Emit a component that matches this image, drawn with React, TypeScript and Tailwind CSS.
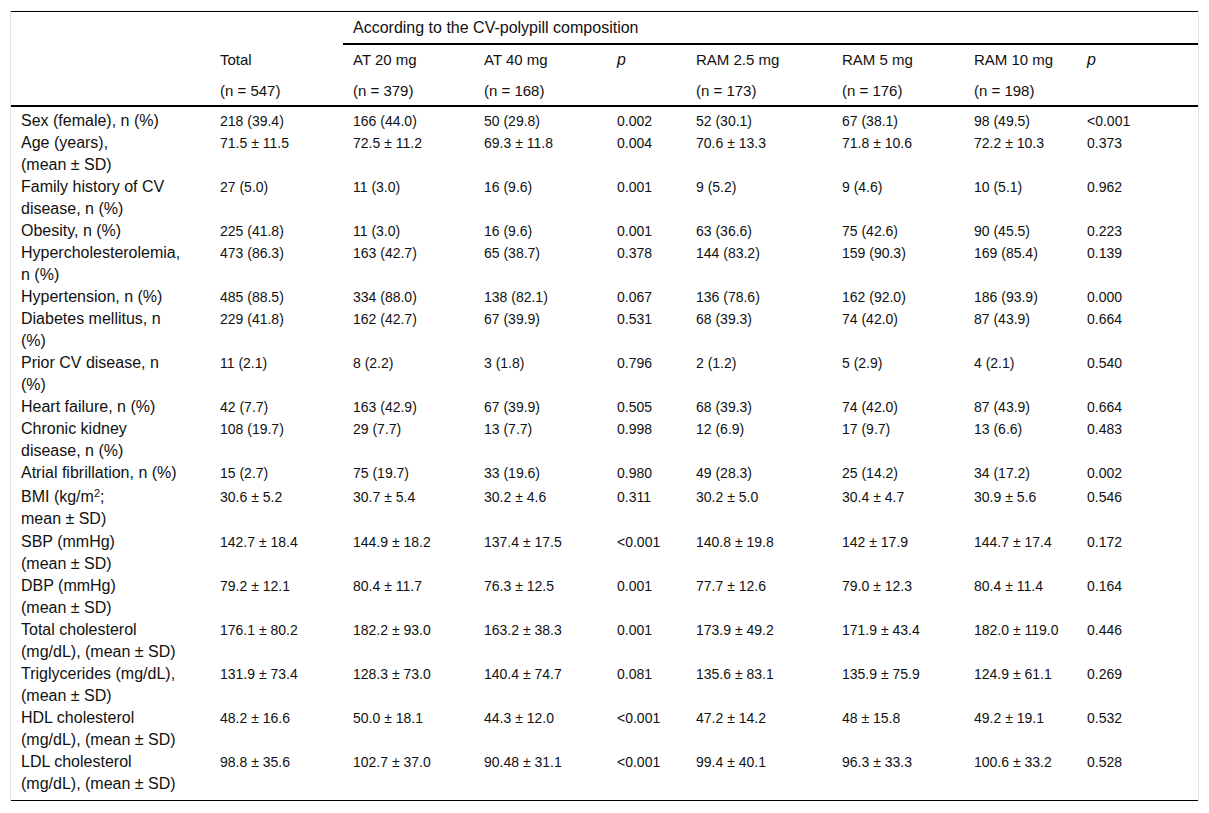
import React from "react";

type Row = { label: React.ReactNode[]; cells: string[]; extra?: boolean };

const rows: Row[] = [
  { label: ["Sex (female), n (%)"], cells: ["218 (39.4)", "166 (44.0)", "50 (29.8)", "0.002", "52 (30.1)", "67 (38.1)", "98 (49.5)", "<0.001"] },
  { label: ["Age (years),", "(mean ± SD)"], cells: ["71.5 ± 11.5", "72.5 ± 11.2", "69.3 ± 11.8", "0.004", "70.6 ± 13.3", "71.8 ± 10.6", "72.2 ± 10.3", "0.373"] },
  { label: ["Family history of CV", "disease, n (%)"], cells: ["27 (5.0)", "11 (3.0)", "16 (9.6)", "0.001", "9 (5.2)", "9 (4.6)", "10 (5.1)", "0.962"] },
  { label: ["Obesity, n (%)"], cells: ["225 (41.8)", "11 (3.0)", "16 (9.6)", "0.001", "63 (36.6)", "75 (42.6)", "90 (45.5)", "0.223"] },
  { label: ["Hypercholesterolemia,", "n (%)"], cells: ["473 (86.3)", "163 (42.7)", "65 (38.7)", "0.378", "144 (83.2)", "159 (90.3)", "169 (85.4)", "0.139"] },
  { label: ["Hypertension, n (%)"], cells: ["485 (88.5)", "334 (88.0)", "138 (82.1)", "0.067", "136 (78.6)", "162 (92.0)", "186 (93.9)", "0.000"] },
  { label: ["Diabetes mellitus, n", "(%)"], cells: ["229 (41.8)", "162 (42.7)", "67 (39.9)", "0.531", "68 (39.3)", "74 (42.0)", "87 (43.9)", "0.664"] },
  { label: ["Prior CV disease, n", "(%)"], cells: ["11 (2.1)", "8 (2.2)", "3 (1.8)", "0.796", "2 (1.2)", "5 (2.9)", "4 (2.1)", "0.540"] },
  { label: ["Heart failure, n (%)"], cells: ["42 (7.7)", "163 (42.9)", "67 (39.9)", "0.505", "68 (39.3)", "74 (42.0)", "87 (43.9)", "0.664"] },
  { label: ["Chronic kidney", "disease, n (%)"], cells: ["108 (19.7)", "29 (7.7)", "13 (7.7)", "0.998", "12 (6.9)", "17 (9.7)", "13 (6.6)", "0.483"] },
  { label: ["Atrial fibrillation, n (%)"], cells: ["15 (2.7)", "75 (19.7)", "33 (19.6)", "0.980", "49 (28.3)", "25 (14.2)", "34 (17.2)", "0.002"] },
  {
    label: [
      <>
        BMI (kg/m<sup className="text-[11px]">2</sup>;
      </>,
      "mean ± SD)",
    ],
    cells: ["30.6 ± 5.2", "30.7 ± 5.4", "30.2 ± 4.6", "0.311", "30.2 ± 5.0", "30.4 ± 4.7", "30.9 ± 5.6", "0.546"],
    extra: true,
  },
  { label: ["SBP (mmHg)", "(mean ± SD)"], cells: ["142.7 ± 18.4", "144.9 ± 18.2", "137.4 ± 17.5", "<0.001", "140.8 ± 19.8", "142 ± 17.9", "144.7 ± 17.4", "0.172"] },
  { label: ["DBP (mmHg)", "(mean ± SD)"], cells: ["79.2 ± 12.1", "80.4 ± 11.7", "76.3 ± 12.5", "0.001", "77.7 ± 12.6", "79.0 ± 12.3", "80.4 ± 11.4", "0.164"] },
  { label: ["Total cholesterol", "(mg/dL), (mean ± SD)"], cells: ["176.1 ± 80.2", "182.2 ± 93.0", "163.2 ± 38.3", "0.001", "173.9 ± 49.2", "171.9 ± 43.4", "182.0 ± 119.0", "0.446"] },
  { label: ["Triglycerides (mg/dL),", "(mean ± SD)"], cells: ["131.9 ± 73.4", "128.3 ± 73.0", "140.4 ± 74.7", "0.081", "135.6 ± 83.1", "135.9 ± 75.9", "124.9 ± 61.1", "0.269"] },
  { label: ["HDL cholesterol", "(mg/dL), (mean ± SD)"], cells: ["48.2 ± 16.6", "50.0 ± 18.1", "44.3 ± 12.0", "<0.001", "47.2 ± 14.2", "48 ± 15.8", "49.2 ± 19.1", "0.532"] },
  { label: ["LDL cholesterol", "(mg/dL), (mean ± SD)"], cells: ["98.8 ± 35.6", "102.7 ± 37.0", "90.48 ± 31.1", "<0.001", "99.4 ± 40.1", "96.3 ± 33.3", "100.6 ± 33.2", "0.528"] },
];

const groups = [
  { name: "Total", n: "(n = 547)" },
  { name: "AT 20 mg", n: "(n = 379)" },
  { name: "AT 40 mg", n: "(n = 168)" },
  { name: "p", n: "" },
  { name: "RAM 2.5 mg", n: "(n = 173)" },
  { name: "RAM 5 mg", n: "(n = 176)" },
  { name: "RAM 10 mg", n: "(n = 198)" },
  { name: "p", n: "" },
];

export default function App() {
  return (
    <div className="min-h-screen bg-white pt-[10px] text-[16px] leading-[22px] text-[#111] font-['Liberation_Sans',Arial,sans-serif]">
      <div className="ml-[10px] w-[1189px] border-x border-[#e6e6e6] pt-[1px]">
        <table className="w-full table-fixed border-separate border-spacing-0 border-t border-black text-left">
          <colgroup>
            <col className="w-[199px]" />
            <col className="w-[133px]" />
            <col className="w-[131px]" />
            <col className="w-[133px]" />
            <col className="w-[79px]" />
            <col className="w-[146px]" />
            <col className="w-[132px]" />
            <col className="w-[113px]" />
            <col className="w-[121px]" />
          </colgroup>
          <thead>
            <tr>
              <th className="font-normal" />
              <th className="font-normal" />
              <th colSpan={7} className="border-b-2 border-black pl-[10px] pt-[5px] pb-[4px] font-normal">
                According to the CV-polypill composition
              </th>
            </tr>
            <tr>
              <th className="font-normal" />
              {groups.map((g, i) => (
                <th key={i} className="whitespace-nowrap pl-[10px] pt-[4px] pb-[5px] text-[15px] font-normal">
                  {g.name === "p" ? <i className="text-[16px]">p</i> : g.name}
                </th>
              ))}
            </tr>
            <tr>
              <th className="border-b-2 border-black font-normal" />
              {groups.map((g, i) => (
                <th key={i} className="whitespace-nowrap border-b-2 border-black pl-[10px] pt-[4px] pb-[3px] text-[15px] font-normal">
                  {g.n}
                </th>
              ))}
            </tr>
          </thead>
          <tbody>
            {rows.map((r, ri) => {
              const first = ri === 0;
              const last = ri === rows.length - 1;
              const pad = first ? "pt-[3px]" : r.extra ? "pt-[2px] pb-[1px]" : last ? "pb-[5px]" : "";
              const bottom = last ? "border-b border-black" : "";
              return (
                <tr key={ri}>
                  <td className={`pl-[10px] align-top whitespace-nowrap ${pad} ${bottom}`}>
                    {r.label.map((l, li) => (
                      <div key={li}>{l}</div>
                    ))}
                  </td>
                  {r.cells.map((c, ci) => (
                    <td key={ci} className={`pl-[10px] align-top whitespace-nowrap text-[14px] ${pad} ${bottom}`}>
                      {c}
                    </td>
                  ))}
                </tr>
              );
            })}
          </tbody>
        </table>
      </div>
    </div>
  );
}
